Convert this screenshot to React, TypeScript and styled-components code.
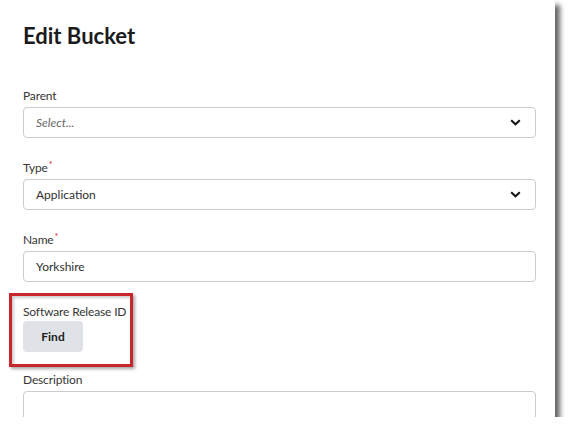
import React from "react";
import styled, { createGlobalStyle } from "styled-components";

const Global = createGlobalStyle`
  html, body { margin: 0; padding: 0; background: #ffffff; }
  body { font-family: Lato, "Noto Sans", sans-serif; }
  * { box-sizing: border-box; }
`;

const Panel = styled.div`
  width: 555px;
  height: 417px;
  background: #ffffff;
  padding: 24px 19px 0 23px;
  overflow: hidden;
  box-shadow: 5px 5px 5px rgba(0, 0, 0, 0.6);
  display: flex;
  flex-direction: column;
`;

const Title = styled.h1`
  margin: 0 0 40px 0;
  font-size: 22px;
  line-height: 24px;
  font-weight: 700;
  color: #1b1b1b;
`;

const Field = styled.div<{ $gap?: number }>`
  position: relative;
  display: flex;
  flex-direction: column;
  flex-shrink: 0;
  margin-bottom: ${(p) => (p.$gap ?? 22)}px;
`;

const Label = styled.label<{ $below?: number }>`
  display: block;
  height: 16px;
  font-size: 12px;
  line-height: 16px;
  letter-spacing: -0.15px;
  color: #363636;
  margin-bottom: ${(p) => (p.$below ?? 3)}px;
`;

const Req = styled.span`
  position: relative;
  top: -4px;
  color: #d0242b;
  font-size: 9px;
  line-height: 0;
  margin-left: 1px;
`;

const Box = styled.div<{ $tall?: boolean }>`
  height: ${(p) => (p.$tall ? 60 : 31)}px;
  border: 1px solid #c9cdd3;
  border-radius: 4px;
  display: flex;
  align-items: center;
  justify-content: space-between;
  padding: 0 14px 0 12px;
  font-size: 12px;
  color: #303030;
`;

const Placeholder = styled.span`
  font-style: italic;
  color: #666666;
`;

const Button = styled.button`
  width: 60px;
  height: 31px;
  border: none;
  border-radius: 4px;
  background: #dfe2e6;
  font-family: inherit;
  font-size: 12px;
  font-weight: 700;
  color: #222;
  padding: 0;
`;

const Highlight = styled.div`
  position: absolute;
  left: -14px;
  top: -11px;
  width: 124px;
  height: 74px;
  border: 3px solid #c9262c;
  box-shadow: 2px 2px 3px rgba(0, 0, 0, 0.35), inset 2px 2px 3px rgba(0, 0, 0, 0.2);
  pointer-events: none;
`;

const Chevron = () => (
  <svg width="11" height="7" viewBox="0 0 11 7">
    <path d="M1.2 1.2 L5.5 5.3 L9.8 1.2" fill="none" stroke="#111" strokeWidth="2" />
  </svg>
);

export default function App() {
  return (
    <>
      <Global />
      <Panel>
        <Title>Edit Bucket</Title>
        <Field>
          <Label>Parent</Label>
          <Box>
            <Placeholder>Select...</Placeholder>
            <Chevron />
          </Box>
        </Field>
        <Field>
          <Label>
            Type<Req>*</Req>
          </Label>
          <Box>
            <span>Application</span>
            <Chevron />
          </Box>
        </Field>
        <Field>
          <Label>
            Name<Req>*</Req>
          </Label>
          <Box>
            <span>Yorkshire</span>
          </Box>
        </Field>
        <Field $gap={20}>
          <Label $below={1}>Software Release ID</Label>
          <div>
            <Button>Find</Button>
          </div>
          <Highlight />
        </Field>
        <Field>
          <Label>Description</Label>
          <Box $tall />
        </Field>
      </Panel>
    </>
  );
}
